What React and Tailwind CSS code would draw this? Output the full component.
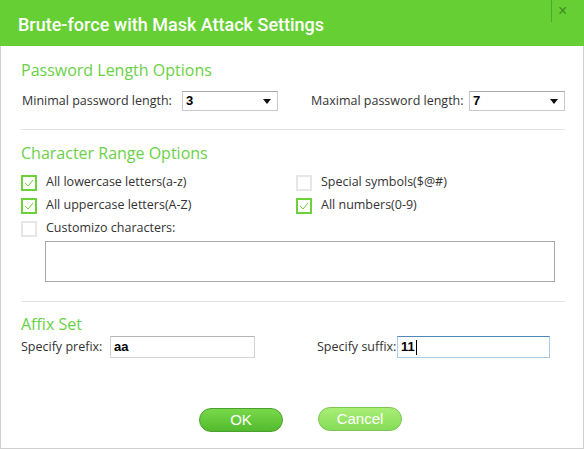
import React from "react";

function Check({ checked }) {
  return (
    <span
      className={
        "w-[16px] h-[16px] flex items-center justify-center shrink-0 border-2 " +
        (checked ? "border-[#6cd13b] bg-white" : "border-[#e6e6e6] bg-white")
      }
    >
      {checked && (
        <svg width="10" height="8" viewBox="0 0 10 8" fill="none">
          <path d="M1 4l3 3 5-6" stroke="#6cd13b" strokeWidth="1" />
        </svg>
      )}
    </span>
  );
}

function Option({ checked, label }) {
  return (
    <div className="flex items-center gap-[9px] h-[23px] whitespace-nowrap">
      <Check checked={checked} />
      <span>{label}</span>
    </div>
  );
}

function Select({ value, className }) {
  return (
    <div
      className={
        "h-[20px] shrink-0 border border-[#c9c9c9] border-t-[#a8a8a8] bg-white flex items-center justify-between pl-[3px] pr-[6px] " +
        className
      }
    >
      <span className="font-['Liberation_Sans',sans-serif] font-bold text-[13px] text-black">{value}</span>
      <svg width="8" height="5" viewBox="0 0 8 5">
        <path d="M0 0h8L4 5z" fill="#111" />
      </svg>
    </div>
  );
}

export default function App() {
  return (
    <div className="w-[584px] h-[449px] bg-white font-['Open_Sans',sans-serif] text-[12.5px] text-[#333] flex flex-col">
      <div className="h-[46px] bg-[#66cf33] flex items-start">
        <h1 className="flex-1 pl-[18px] pt-[11px] text-white text-[18px] font-['Roboto',sans-serif] font-medium">
          Brute-force with Mask Attack Settings
        </h1>
        <div className="w-px h-[22px] bg-[#4fa82a] mr-[6px]" />
        <span className="w-[26px] pt-[3px] text-[16px] leading-[16px] text-[#3c8c1e] font-['Liberation_Sans',sans-serif]">
          ×
        </span>
      </div>

      <div className="flex-1 border-l border-r border-b border-[#cfcfcf] flex flex-col px-[20px] pb-[15px]">
        <div className="pt-[12px] text-[16px] text-[#6ad146]">Password Length Options</div>
        <div className="flex items-center mt-[7px] h-[24px] whitespace-nowrap">
          <span className="w-[161px] pl-[1px] shrink-0">Minimal password length:</span>
          <Select value="3" className="w-[96px]" />
          <span className="ml-[33px] w-[158px] shrink-0">Maximal password length:</span>
          <Select value="7" className="w-[96px]" />
        </div>
        <div className="h-px bg-[#e2e2e2] mt-[16px] mr-[-2px]" />

        <div className="pt-[11px] text-[16px] text-[#6ad146]">Character Range Options</div>
        <div className="grid grid-cols-[275px_1fr] mt-[6px]">
          <Option checked label="All lowercase letters(a-z)" />
          <Option checked={false} label="Special symbols($@#)" />
          <Option checked label="All uppercase letters(A-Z)" />
          <Option checked label="All numbers(0-9)" />
          <Option checked={false} label="Customizo characters:" />
        </div>
        <div className="ml-[24px] mr-[8px] mt-[1px] h-[41px] border border-[#a9a9a9]" />
        <div className="h-px bg-[#e2e2e2] mt-[19px] mr-[-2px]" />

        <div className="pt-[10px] text-[16px] text-[#6ad146]">Affix Set</div>
        <div className="flex items-center mt-[0px] whitespace-nowrap">
          <span className="w-[89px] shrink-0">Specify prefix:</span>
          <div className="w-[145px] h-[22px] shrink-0 border border-[#d4d4d4] border-t-[#b5b5b5] flex items-center pl-[3px] font-['Liberation_Sans',sans-serif] font-bold text-[13px] text-black">
            aa
          </div>
          <span className="ml-[62px] w-[80px] shrink-0">Specify suffix:</span>
          <div className="w-[153px] h-[22px] shrink-0 border border-[#a9cbe6] border-t-[#4f88b6] flex items-center pl-[3px] font-['Liberation_Sans',sans-serif] font-bold text-[13px] text-black">
            11<span className="w-px h-[15px] bg-black ml-[1px]" />
          </div>
        </div>

        <div className="flex-1" />
        <div className="flex gap-[35px] pl-[178px] pb-[1px]">
          <button className="w-[84px] h-[24px] rounded-full bg-gradient-to-b from-[#78d84a] to-[#52bb2d] border border-[#4c9f2c] text-white text-[15px] font-['Liberation_Sans',sans-serif] mt-[1px]">
            OK
          </button>
          <button className="w-[84px] h-[24px] rounded-full bg-gradient-to-b from-[#a8ee76] to-[#86dc57] border border-[#7dc452] text-white text-[15px] font-['Liberation_Sans',sans-serif]">
            Cancel
          </button>
        </div>
      </div>
    </div>
  );
}
